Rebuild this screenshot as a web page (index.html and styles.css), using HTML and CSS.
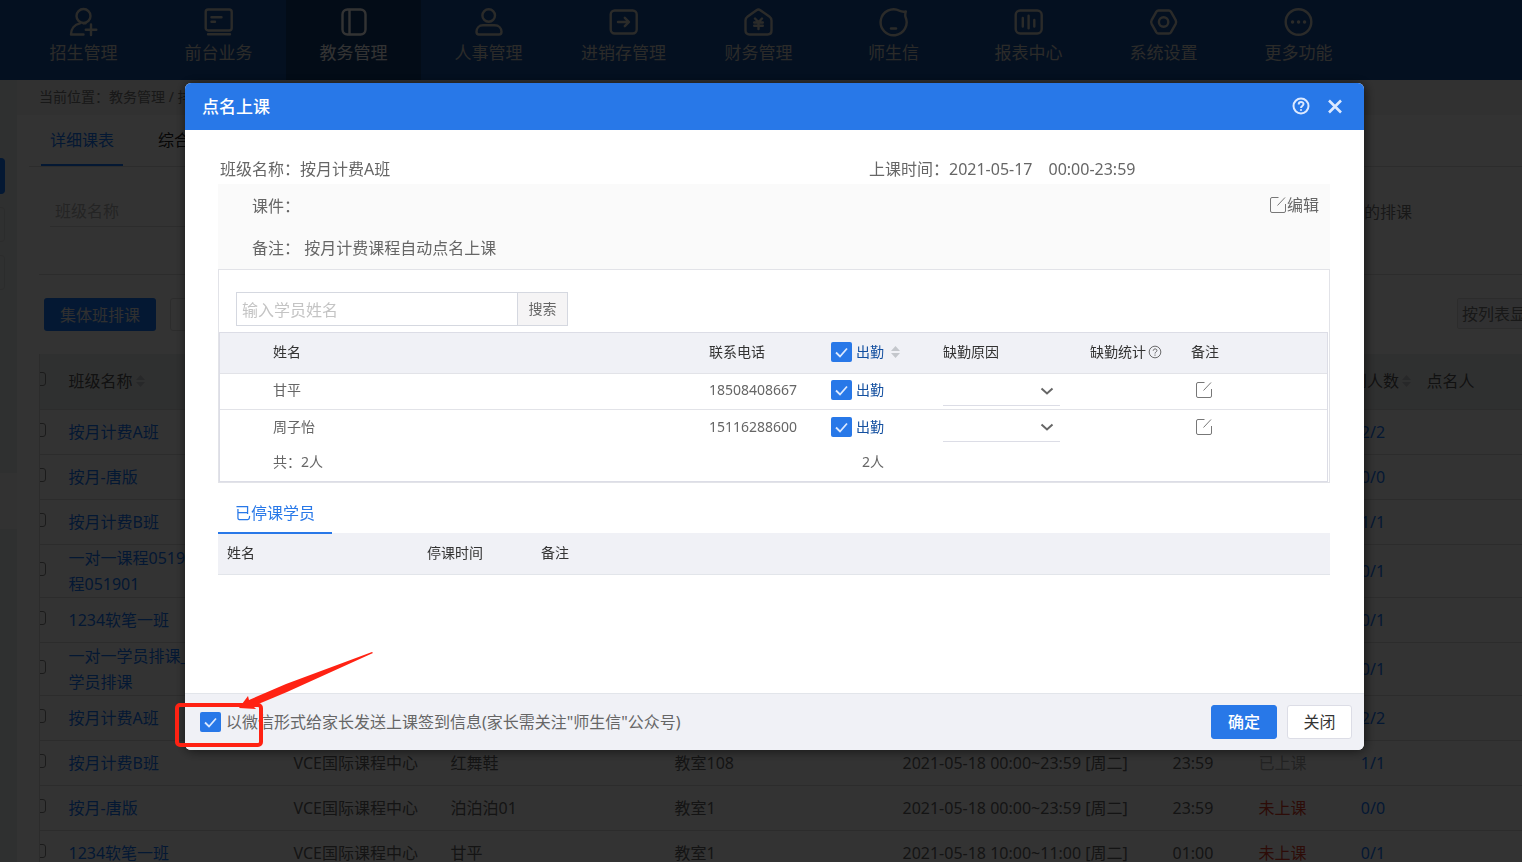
FILE: index.html
```html
<!DOCTYPE html>
<html lang="zh-CN">
<head>
<meta charset="utf-8">
<title>点名上课</title>
<link rel="stylesheet" href="styles.css">
</head>
<body>
<svg class="sprite" aria-hidden="true">
  <symbol id="edit" viewBox="1 1 16 16"><path d="M9.500 1.500H3A1.500 1.500 0 0 0 1.500 3v12A1.500 1.500 0 0 0 3 16.500h12a1.500 1.500 0 0 0 1.500-1.500V8M8.500 9.500l7.500-8"/></symbol>
  <symbol id="help" viewBox="0 0 18 18"><circle cx="9" cy="9" r="7.500"/><path d="M6.700 7.400c0-3.200 4.800-3 4.800-.3C11.500 9 9 8.900 9 11"/><path d="M9 12.300v1.500"/></symbol>
  <symbol id="sort" viewBox="0 0 9 12"><path d="M0 5l4.500-5L9 5zM0 7h9l-4.500 5z"/></symbol>
</svg>
<div class="page">
  <nav class="topnav">
    <a class="nav-item" href="#"><svg viewBox="0 0 30 30"><circle cx="14.500" cy="9" r="7"/><path d="M11 16.300C5.500 17.500 2 22 2 27.500h12.500M14.500 16.200h2M22 17.500v10.500M16.800 22.700h10.500"/></svg><span>招生管理</span></a>
    <a class="nav-item" href="#"><svg viewBox="0 0 30 30"><rect x="1.700" y="2.500" width="26" height="21" rx="2.500"/><path d="M7.500 10.300h10M7.500 14.700h3.500M4 27.300h22"/></svg><span>前台业务</span></a>
    <a class="nav-item active" href="#"><svg viewBox="0 0 30 30"><rect x="3.500" y="2.500" width="23" height="25" rx="5"/><path d="M10.500 3v24"/></svg><span>教务管理</span></a>
    <a class="nav-item" href="#"><svg viewBox="0 0 30 30"><circle cx="14.700" cy="8.500" r="6.300"/><path d="M9 18.300h11.500c4.500 0 7 3 7 6.500 0 2-.8 2.700-2.500 2.700H5c-1.700 0-2.500-.7-2.500-2.700 0-3.500 2.500-6.500 6.500-6.500z"/></svg><span>人事管理</span></a>
    <a class="nav-item" href="#"><svg viewBox="0 0 30 30"><rect x="1.700" y="3.500" width="26" height="23" rx="4"/><path d="M9 15h10.500M15.800 10.800L20 15l-4.200 4.200"/></svg><span>进销存管理</span></a>
    <a class="nav-item" href="#"><svg viewBox="0 0 30 30"><path d="M12.500 3.200c1.400-1 2.400-1 3.800 0l9 6.200c1.700 1.300 2.200 2.300 2.200 4.100v10c0 2.500-1.500 4-4 4H5.500c-2.500 0-4-1.500-4-4v-10c0-1.800.5-2.800 2.200-4.100zM11 11.500l3.500 3.700 3.500-3.700M14.500 15.200V22M10.200 15.500h8.600M10.200 18.700h8.600"/></svg><span>财务管理</span></a>
    <a class="nav-item" href="#"><svg viewBox="0 0 30 30"><path d="M20.500 3.700A13 13 0 1 0 26.500 10c-.5-1.800-.2-3.700.3-5.500-2.500.4-4.500.2-6.300-.8z"/><path d="M12 21.500h5"/></svg><span>师生信</span></a>
    <a class="nav-item" href="#"><svg viewBox="0 0 30 30"><rect x="1.700" y="3.500" width="26" height="23" rx="4.500"/><path d="M8.800 11v8.500M14.600 8.800v12.500M20.300 13v6.500"/></svg><span>报表中心</span></a>
    <a class="nav-item" href="#"><svg viewBox="0 0 30 30"><path d="M9.500 3.500h10.300c1 0 1.600.4 2.100 1.200l4.800 8.500c.6 1.200.6 2.400 0 3.600l-4.800 8.500c-.5.800-1.100 1.200-2.100 1.200H9.500c-1 0-1.600-.4-2.100-1.200l-4.800-8.500c-.6-1.200-.6-2.400 0-3.600l4.800-8.500c.5-.8 1.100-1.200 2.100-1.200z"/><circle cx="14.600" cy="15" r="4.700"/></svg><span>系统设置</span></a>
    <a class="nav-item" href="#"><svg viewBox="0 0 30 30"><circle cx="14.500" cy="15" r="12.800"/><path d="M8.500 15h.1M14.500 15h.1M20.500 15h.1" stroke-width="3.400"/></svg><span>更多功能</span></a>
  </nav>
  <div class="workspace">
    <aside class="rail"><i class="rail-tab current"></i><i class="rail-tab"></i><i class="rail-tab"></i><i class="rail-block"></i></aside>
    <main class="content">
      <div class="crumbs">当前位置：教务管理 / 排课</div>
      <div class="tabs"><a class="tab on" href="#">详细课表</a><a class="tab" href="#">综合课表</a></div>
      <div class="filters"><input class="filter-input" type="text" placeholder="班级名称" aria-label="班级名称"><span class="filter-note">的排课</span></div>
      <div class="toolbar"><button class="group-btn" type="button">集体班排课</button><button class="plain-btn" type="button" aria-label="排课"></button><select class="view-select" aria-label="显示方式"><option>按列表显示</option></select></div>
      <table class="schedule">
        <colgroup><col class="c-check"><col class="c-name"><col class="c-campus"><col class="c-teacher"><col class="c-room"><col class="c-time"><col class="c-length"><col class="c-state"><col class="c-count"><col></colgroup>
        <thead><tr><th><input type="checkbox" aria-label="全选"></th><th>班级名称<svg class="sort"><use href="#sort"/></svg></th><th></th><th></th><th></th><th></th><th></th><th></th><th class="count">签到人数<svg class="sort"><use href="#sort"/></svg></th><th>点名人</th></tr></thead>
        <tbody>
          <tr><td><input type="checkbox" aria-label="选择"></td><td><a href="#">按月计费A班</a></td><td></td><td></td><td></td><td></td><td></td><td></td><td class="count"><a href="#">2/2</a></td><td></td></tr>
          <tr><td><input type="checkbox" aria-label="选择"></td><td><a href="#">按月-唐版</a></td><td></td><td></td><td></td><td></td><td></td><td></td><td class="count"><a href="#">0/0</a></td><td></td></tr>
          <tr><td><input type="checkbox" aria-label="选择"></td><td><a href="#">按月计费B班</a></td><td></td><td></td><td></td><td></td><td></td><td></td><td class="count"><a href="#">1/1</a></td><td></td></tr>
          <tr><td><input type="checkbox" aria-label="选择"></td><td><a href="#">一对一课程0519<br>程051901</a></td><td></td><td></td><td></td><td></td><td></td><td></td><td class="count"><a href="#">0/1</a></td><td></td></tr>
          <tr><td><input type="checkbox" aria-label="选择"></td><td><a href="#">1234软笔一班</a></td><td></td><td></td><td></td><td></td><td></td><td></td><td class="count"><a href="#">0/1</a></td><td></td></tr>
          <tr><td><input type="checkbox" aria-label="选择"></td><td><a href="#">一对一学员排课_<br>学员排课</a></td><td></td><td></td><td></td><td></td><td></td><td></td><td class="count"><a href="#">0/1</a></td><td></td></tr>
          <tr><td><input type="checkbox" aria-label="选择"></td><td><a href="#">按月计费A班</a></td><td></td><td></td><td></td><td></td><td></td><td></td><td class="count"><a href="#">2/2</a></td><td></td></tr>
          <tr><td><input type="checkbox" aria-label="选择"></td><td><a href="#">按月计费B班</a></td><td>VCE国际课程中心</td><td>红舞鞋</td><td>教室108</td><td>2021-05-18 00:00~23:59 [周二]</td><td>23:59</td><td class="done">已上课</td><td class="count"><a href="#">1/1</a></td><td></td></tr>
          <tr><td><input type="checkbox" aria-label="选择"></td><td><a href="#">按月-唐版</a></td><td>VCE国际课程中心</td><td>泊泊泊01</td><td>教室1</td><td>2021-05-18 00:00~23:59 [周二]</td><td>23:59</td><td class="todo">未上课</td><td class="count"><a href="#">0/0</a></td><td></td></tr>
          <tr><td><input type="checkbox" aria-label="选择"></td><td><a href="#">1234软笔一班</a></td><td>VCE国际课程中心</td><td>甘平</td><td>教室1</td><td>2021-05-18 10:00~11:00 [周二]</td><td>01:00</td><td class="todo">未上课</td><td class="count"><a href="#">0/1</a></td><td></td></tr>
        </tbody>
      </table>
    </main>
  </div>
</div>

<div class="backdrop">
  <section class="dialog" role="dialog" aria-modal="true" aria-labelledby="dialog-title">
    <header class="dialog-head">
      <h1 id="dialog-title">点名上课</h1>
      <button class="head-btn" type="button" aria-label="帮助"><svg viewBox="0 0 18 18"><use href="#help"/></svg></button>
      <button class="head-btn" type="button" aria-label="关闭窗口"><svg class="cross" viewBox="0 0 18 18"><path d="M3 3.500l12 12M15 3.500l-12 12"/></svg></button>
    </header>
    <div class="dialog-body">
      <div class="summary"><span>班级名称：按月计费A班</span><span>上课时间：2021-05-17&emsp;00:00-23:59</span></div>
      <div class="notes">
        <p>课件：</p>
        <button class="edit-btn" type="button"><svg class="edit"><use href="#edit"/></svg>编辑</button>
        <p>备注： 按月计费课程自动点名上课</p>
      </div>
      <div class="roster-box">
        <form class="search"><input type="text" placeholder="输入学员姓名" aria-label="学员姓名"><button type="button">搜索</button></form>
        <table class="roster">
          <colgroup><col class="r-name"><col class="r-phone"><col class="r-attend"><col class="r-reason"><col class="r-stat"><col></colgroup>
          <thead><tr><th>姓名</th><th>联系电话</th><th><label class="attend"><input class="check" type="checkbox" checked>出勤<svg class="sort"><use href="#sort"/></svg></label></th><th>缺勤原因</th><th>缺勤统计<svg class="tip"><use href="#help"/></svg></th><th>备注</th></tr></thead>
          <tbody>
            <tr><td>甘平</td><td>18508408667</td><td><label class="attend"><input class="check" type="checkbox" checked>出勤</label></td><td><select class="reason" aria-label="缺勤原因"><option></option></select></td><td></td><td><button class="note-btn" type="button" aria-label="备注"><svg class="edit"><use href="#edit"/></svg></button></td></tr>
            <tr><td>周子怡</td><td>15116288600</td><td><label class="attend"><input class="check" type="checkbox" checked>出勤</label></td><td><select class="reason" aria-label="缺勤原因"><option></option></select></td><td></td><td><button class="note-btn" type="button" aria-label="备注"><svg class="edit"><use href="#edit"/></svg></button></td></tr>
          </tbody>
          <tfoot><tr><td>共：2人</td><td></td><td class="total">2人</td><td></td><td></td><td></td></tr></tfoot>
        </table>
      </div>
      <div class="sub-tabs"><a href="#">已停课学员</a></div>
      <table class="paused">
        <colgroup><col class="p-name"><col class="p-time"><col></colgroup>
        <thead><tr><th>姓名</th><th>停课时间</th><th>备注</th></tr></thead>
      </table>
    </div>
    <footer class="dialog-foot">
      <label class="notify"><input class="check" type="checkbox" checked>以微信形式给家长发送上课签到信息(家长需关注"师生信"公众号)</label>
      <button class="btn primary" type="button">确定</button>
      <button class="btn" type="button">关闭</button>
      <svg class="callout" viewBox="0 0 210 105" aria-hidden="true"><rect x="7" y="60" width="84" height="40" rx="3"/><path d="M69 63l9-12 1 4 37-16 86-32 1 1-86 39-31 13-2 2 2 2z"/></svg>
    </footer>
  </section>
</div>
</body>
</html>
```

FILE: styles.css
```css
* { box-sizing: border-box; }

body {
  margin: 0;
  font: 16px/24px "Noto Sans", "Noto Sans CJK SC", sans-serif;
  color: #333;
}

a { color: inherit; text-decoration: none; }
button, input, select { font: inherit; color: inherit; }
button { cursor: pointer; }
p, h1 { margin: 0; }
th { font-weight: 400; text-align: left; }
svg { display: block; flex: none; fill: none; }

.sprite { position: absolute; width: 0; height: 0; }

.page { height: 100vh; overflow: hidden; background: #f0f0f0; }

/* top navigation */
.topnav { display: flex; height: 80px; padding-left: 16px; background: #1450a0; }
.nav-item {
  display: flex;
  flex-direction: column;
  align-items: center;
  gap: 4px;
  width: 135px;
  padding-top: 7px;
  font-size: 17px;
  color: #d8d4ce;
}
.nav-item.active { color: #fff; background: #0f3c73; }
.nav-item svg {
  width: 30px;
  height: 30px;
  stroke: currentColor;
  stroke-width: 2.4;
  stroke-linecap: round;
  stroke-linejoin: round;
}

/* page behind the dialog */
.workspace { display: flex; }
.rail { flex: none; width: 17px; height: 100vh; padding-top: 78px; background: #e9eeee; }
.rail-tab { display: block; width: 5px; height: 35px; margin-bottom: 13px; border: 1px solid #d8dcdc; border-left: 0; border-radius: 0 4px 4px 0; }
.rail-tab.current { height: 36px; border-color: #1478ff; background: #1478ff; }
.rail-block { display: block; height: 56px; margin-top: 183px; background: #fafafa; }

.content { flex: 1; min-width: 0; background: #fff; }
.crumbs { height: 35px; padding-left: 22px; font-size: 14px; line-height: 34px; color: #777; background: #f2f2f2; }
.tabs { display: flex; gap: 26px; height: 52px; margin-left: 12px; padding-left: 12px; border-bottom: 1px solid #ddd; }
.tab { padding: 0 9px; line-height: 50px; color: #222; }
.tab.on { color: #1478ff; border-bottom: 2px solid #1478ff; }
.filters { display: flex; justify-content: space-between; align-items: center; height: 108px; margin-left: 22px; padding: 0 110px 18px 11px; border-bottom: 1px solid #ddd; }
.filter-input { width: 200px; height: 31px; padding: 0 5px; border: 0; border-bottom: 1px solid #ddd; background: none; }
.filter-input::placeholder { color: #b4b4b4; opacity: 1; }
.filter-note { color: #777; }
.toolbar { display: flex; gap: 14px; height: 79px; margin-right: -30px; padding: 23px 0 0 27px; }
.group-btn { width: 112px; height: 33px; padding: 0; border: 0; border-radius: 3px; color: #eee; background: #1478ff; }
.plain-btn { width: 112px; height: 33px; border: 1px solid #ddd; border-radius: 3px; background: #fff; }
.view-select { width: 95px; height: 31px; margin-left: auto; padding: 0 4px; border: 1px solid #ddd; border-radius: 2px; appearance: none; color: #777; background: #f5f6f7; }

.schedule { width: calc(100% - 22px); margin-left: 22px; table-layout: fixed; border-collapse: collapse; }
.schedule th { height: 55px; color: #555; background: #ebeeee; border-bottom: 1px solid #ddd; }
.schedule td { height: 45px; color: #666; border-bottom: 1px solid #ddd; }
.schedule th, .schedule td { padding: 0 0 0 10px; line-height: 26px; white-space: nowrap; overflow: hidden; }
.schedule th:first-child, .schedule td:first-child { padding: 0; border-left: 1px solid #ddd; }
.schedule a { color: #1478ff; }
.schedule .count { padding: 0; text-align: center; }
.schedule .done { color: #aaa; }
.schedule .todo { color: #e03c28; }
.schedule input { display: block; width: 14px; height: 14px; margin: 0 0 4px -8px; border: 1px solid #888; border-radius: 3px; appearance: none; }
.c-check { width: 19px; }
.c-name { width: 225px; }
.c-campus { width: 157px; }
.c-teacher { width: 224px; }
.c-room { width: 228px; }
.c-time { width: 270px; }
.c-length { width: 86px; }
.c-state { width: 81px; }
.c-count { width: 87px; }

.sort { display: inline-block; width: 9px; height: 12px; margin-left: 3px; fill: #c4c7cc; }

/* dialog */
.backdrop {
  position: fixed;
  inset: 0;
  display: flex;
  padding: 83px 158px 112px 185px;
  background: rgba(0, 0, 0, .8);
}
.dialog {
  flex: 1;
  min-width: 0;
  display: flex;
  flex-direction: column;
  color: #666;
  background: #fff;
  border-radius: 6px;
  box-shadow: 1px 1px 12px rgba(0, 0, 0, .6);
}
.dialog-head {
  display: flex;
  align-items: center;
  gap: 16px;
  height: 47px;
  padding: 0 20px 0 17px;
  color: #fff;
  background: #2878e8;
  border-radius: 6px 6px 0 0;
}
.dialog-head h1 { flex: 1; font-size: 17px; line-height: 24px; font-weight: 500; }
.head-btn { padding: 0 0 2px; border: 0; color: #dce9ff; background: none; }
.head-btn svg { width: 18px; height: 18px; stroke: currentColor; stroke-width: 2; }
.head-btn .cross { stroke-width: 2.6; }

.dialog-body { flex: 1; padding: 27px 34px 0 33px; }
.summary { display: grid; grid-template-columns: 649px 1fr; height: 27px; padding-left: 2px; }
.notes {
  display: grid;
  grid-template-columns: 1fr auto;
  align-content: start;
  row-gap: 18px;
  height: 85px;
  padding: 10px 11px 0 34px;
  background: #fafafa;
}
.edit-btn { display: flex; align-items: center; gap: 1px; height: 24px; padding: 0 0 2px; border: 0; background: none; }
.edit { width: 16px; height: 16px; stroke: #777; stroke-width: 1; }

.roster-box { padding: 22px 1px 0 0; border: 1px solid #e2e3e8; }
.search { display: flex; height: 34px; margin: 0 0 6px 17px; }
.search input { width: 281px; padding: 2px 5px 0; border: 1px solid #d5d8e0; border-right: 0; border-radius: 0; }
.search input::placeholder { color: #c4c4c4; opacity: 1; }
.search button { width: 51px; padding: 0; font-size: 14px; border: 1px solid #d5d8e0; background: #f5f4f5; }

.roster { width: 100%; table-layout: fixed; border-collapse: separate; border-spacing: 0; border: 1px solid #dcdde6; font-size: 14px; }
.roster th { height: 41px; padding: 0 0 2px; color: #333; background: #f0f1f6; border-bottom: 1px solid #e2e3e8; }
.roster td { height: 36px; padding: 0 0 3px; }
.roster tbody td:nth-child(4) { padding: 0; }
.roster tfoot td { height: 35px; }
.roster tbody tr:first-child td { border-bottom: 1px solid #e2e3e8; }
.roster th:first-child, .roster td:first-child { padding-left: 53px; }
.roster .total { padding-left: 31px; }
.r-name { width: 489px; }
.r-phone { width: 122px; }
.r-attend { width: 112px; }
.r-reason { width: 147px; }
.r-stat { width: 101px; }
.attend { display: flex; align-items: center; gap: 4px; color: #1450a0; }
.check {
  flex: none;
  width: 21px;
  height: 20px;
  margin: 0;
  border-radius: 2px;
  appearance: none;
  background: #2878e8;
}
.check:checked {
  background: #2878e8 url("data:image/svg+xml,%3Csvg xmlns='http://www.w3.org/2000/svg' viewBox='0 0 21 20'%3E%3Cpath d='M5 10.500l4 4 7-8' fill='none' stroke='%23dce9ff' stroke-width='1.800'/%3E%3C/svg%3E") center / 100% 100%;
}
.reason {
  display: block;
  width: 117px;
  height: 28px;
  border: 0;
  border-bottom: 1px solid #dcdde6;
  border-radius: 0;
  appearance: none;
  background: url("data:image/svg+xml,%3Csvg xmlns='http://www.w3.org/2000/svg' viewBox='0 0 14 8'%3E%3Cpath d='M1.500 1.500L7 6.500l5.500-5' fill='none' stroke='%23666' stroke-width='2'/%3E%3C/svg%3E") 97px 9px / 14px 8px no-repeat;
}
.note-btn { display: block; margin-left: 5px; padding: 0; border: 0; background: none; }
.tip { display: inline-block; width: 14px; height: 14px; margin-left: 2px; stroke: #444; vertical-align: -2px; }

.sub-tabs { display: flex; height: 50px; padding-top: 13px; }
.sub-tabs a { position: relative; height: 38px; padding: 5px 17px 0; color: #2878e8; border-bottom: 2px solid #2878e8; }
.paused { width: 100%; table-layout: fixed; border-collapse: collapse; font-size: 14px; }
.paused th { height: 41px; padding: 0 0 1px 9px; color: #333; background: #f0f1f6; border-bottom: 1px solid #e2e5ea; }
.p-name { width: 200px; }
.p-time { width: 114px; }

.dialog-foot {
  position: relative;
  display: flex;
  align-items: center;
  gap: 10px;
  height: 57px;
  padding: 0 12px 0 15px;
  background: #f0f1f6;
  border-top: 1px solid #e2e5ea;
  border-radius: 0 0 6px 6px;
}
.notify { flex: 1; display: flex; align-items: center; gap: 5px; }
.btn { width: 65px; height: 34px; padding: 0; color: #333; border: 1px solid #dcdde6; border-radius: 3px; background: #fff; }
.btn.primary { width: 66px; color: #fff; border-color: #2878e8; background: #2878e8; font-weight: 500; }
.callout { position: absolute; left: -15px; top: -49px; width: 210px; height: 105px; pointer-events: none; }
.callout rect { stroke: #ff2213; stroke-width: 4; }
.callout path { fill: #ff2213; }
```
